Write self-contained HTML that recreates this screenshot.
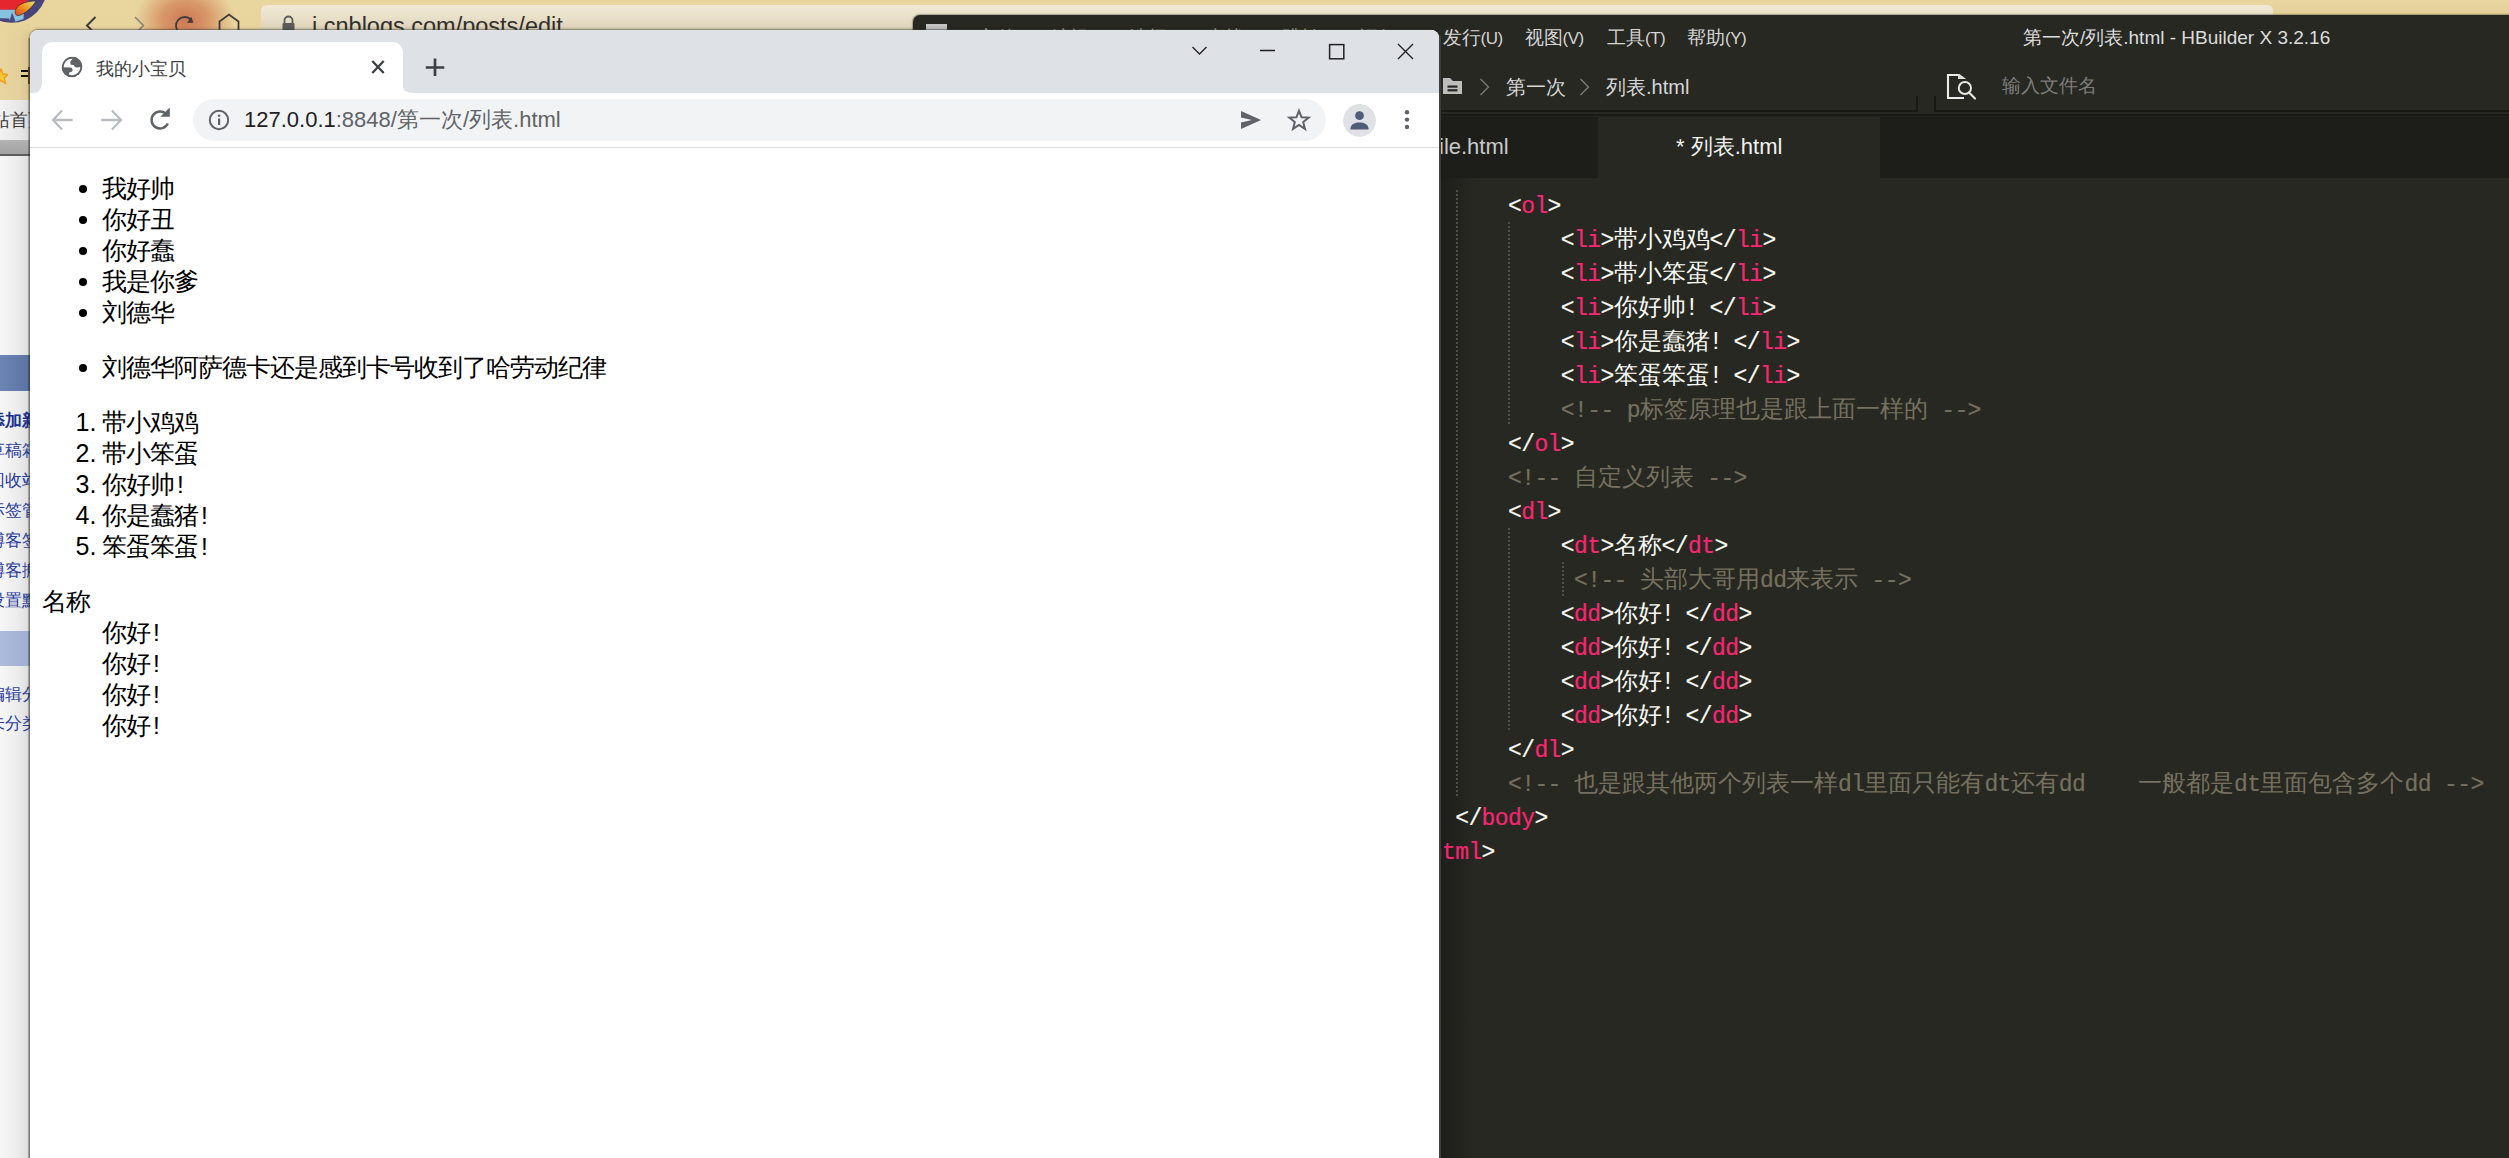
<!DOCTYPE html>
<html><head><meta charset="utf-8">
<style>
*{box-sizing:border-box;margin:0;padding:0}
html,body{width:2509px;height:1158px;overflow:hidden;font-family:"Liberation Sans",sans-serif;background:#e9d7a3}
.abs{position:absolute}
/* background browser */
#bgtop{left:0;top:0;width:2509px;height:40px;background:linear-gradient(#e9d69f 0,#e8d59e 100%)}
#bgaddr{left:261px;top:5px;width:2012px;height:25px;border-radius:6px 6px 0 0;background:linear-gradient(#f1e9d6,#ebe2cc 40%,#ddd2b7)}
#leftstrip{left:0;top:156px;width:30px;height:1002px;background:linear-gradient(90deg,#f7f7f7,#ececec 60%,#dcdcdc)}
/* hbuilder */
#hb{left:913px;top:15px;width:1600px;height:1150px;background:#272822;border-radius:7px 0 0 0;overflow:hidden;box-shadow:0 0 0 1px rgba(140,130,105,.55),0 0 3px rgba(0,0,0,.25)}
/* chrome */
#chrome{left:30px;top:30px;width:1409px;height:1140px;background:#fff;border-radius:8px 8px 0 0;overflow:hidden;box-shadow:0 0 0 1px rgba(90,85,70,.35),0 -1px 3px rgba(0,0,0,.3)}
#tabstrip{left:0;top:0;width:1409px;height:63px;background:#dee1e6}
#tab{left:12px;top:12px;width:361px;height:51px;background:#fff;border-radius:10px 10px 0 0}
#toolbar{left:0;top:63px;width:1409px;height:55px;background:#fff;border-bottom:1px solid #dadce0}
#omni{left:163px;top:69px;width:1133px;height:42px;background:#f1f3f4;border-radius:21px}
#content{left:0;top:118px;width:1409px;height:1022px;background:#fff;font-size:24px;line-height:31px;color:#000}
#content .cjk{font-family:"Liberation Sans",sans-serif}
.code{position:absolute;font-family:"Liberation Mono",monospace;font-size:23px;letter-spacing:-0.6px;-webkit-text-stroke:0.2px currentColor;white-space:pre;color:#f8f8f2;height:34px;line-height:34px}
.ln{position:absolute;white-space:nowrap;height:31px;line-height:31px;font-size:24.5px;letter-spacing:-1px;margin-top:1px}
.bul{position:absolute;left:48.6px;width:8.6px;height:8.6px;border-radius:50%;background:#000;margin-top:1.6px}
.num{position:absolute;left:45.5px;width:50px;height:31px;line-height:31px;font-size:25px;margin-top:1px}
.ex{margin-left:3px}
.mi{top:11px;font-size:19px;line-height:24px;color:#d4d4d4;white-space:nowrap}
.mi i{font-style:normal;font-size:17px;letter-spacing:-0.5px}
.bc{top:60px;font-size:20px;line-height:24px;color:#d6d6d6;white-space:nowrap}
.tabt{top:120px;font-size:22px;line-height:24px;white-space:nowrap}
.ig{width:2px;background:repeating-linear-gradient(#4f4f49 0 2px,transparent 2px 4px)}
.z{font-size:24px;line-height:1px;letter-spacing:0;-webkit-text-stroke:0}
.zx{display:inline-block;width:24px;text-align:left;padding-left:3px;font-family:"Liberation Sans",sans-serif}
.lsi{font-size:17px;line-height:30px;color:#2b3f9e;white-space:nowrap}
.t{color:#f92672}
.c{color:#75715e}
</style></head><body>
<div id="bgtop" class="abs"></div>
<div class="abs" style="left:0;top:20px;width:30px;height:80px;background:linear-gradient(90deg,#e8d59f 0,#e4d19b 18px,#dac690 30px);-webkit-mask-image:linear-gradient(transparent 0,#000 20px)"></div>
<div class="abs" style="left:135px;top:-20px;width:100px;height:80px;border-radius:50%;background:radial-gradient(closest-side,rgba(205,115,80,.95),rgba(210,130,85,.75) 45%,rgba(225,180,120,0) 100%)"></div>
<svg class="abs" style="left:0;top:0" width="60" height="30" viewBox="0 0 60 30">
  <defs><clipPath id="av"><circle cx="12" cy="-12" r="34.8"/></clipPath>
  <linearGradient id="fl" x1="0" y1="1" x2="1" y2="0"><stop offset="0" stop-color="#e0401a"/><stop offset=".5" stop-color="#f0951e"/><stop offset="1" stop-color="#e8e080"/></linearGradient></defs>
  <circle cx="12" cy="-12" r="34.8" fill="#47457a"/>
  <g clip-path="url(#av)">
    <path d="M-5 -5 L28 -5 L27.5 2 C26 4 21 5 19 6 L16.5 9.8 L-5 9.8 Z" fill="#e5262f"/>
    <path d="M-5 9.8 L16.5 9.8 L23.8 14 L23.5 19 L16 21.5 L-5 18.5 Z" fill="#86c3de"/>
    <path d="M9.5 21 L12 12.5 L15.5 21.5 Z" fill="#4a4a80"/>
    <path d="M-5 18 L9 18.5 L10 22 L-5 22 Z" fill="#46447a"/>
    <path d="M15.8 14.5 C14 11.5 16 7 21 4.2 C26 1.5 33 0.8 35.8 1.2 C34 4.5 30 9 26.5 11.5 C22.5 14.5 17.5 17 15.8 14.5 Z" fill="url(#fl)" stroke="#222" stroke-width=".6"/>
  </g>
</svg>
<svg class="abs" style="left:80px;top:9px" width="170" height="24" viewBox="0 0 170 24">
  <path d="M15.5 8 L7 16.5 L15.5 25" fill="none" stroke="#3a3a3a" stroke-width="2"/>
  <path d="M55 8 L63.5 16.5 L55 25" fill="none" stroke="#8a8578" stroke-width="1.6"/>
  <path d="M110.8 10.5 A8.7 8.7 0 1 0 112.3 21" fill="none" stroke="#3c3c3c" stroke-width="1.8"/>
  <path d="M107 13.8 L113.5 13.8 L111.3 8 Z" fill="#3c3c3c"/>
  <path d="M139.5 23 L139.5 12.5 L149 5.5 L158.5 12.5 L158.5 23" fill="none" stroke="#3c3c3c" stroke-width="1.8"/>
</svg>
<div id="bgaddr" class="abs"></div>
<svg class="abs" style="left:281px;top:15px" width="15" height="18" viewBox="0 0 15 18"><path d="M3.5 8 V5.5 A4 4 0 0 1 11.5 5.5 V8" fill="none" stroke="#5a5a5a" stroke-width="1.8"/><rect x="1.5" y="8" width="12" height="10" rx="1" fill="#5a5a5a"/></svg>
<div class="abs" style="left:312px;top:11px;font-size:23.5px;line-height:30px;color:#303030;white-space:nowrap">i.cnblogs.com/posts/edit</div>
<div class="abs" style="left:2273px;top:0;width:236px;height:16px;background:linear-gradient(#e8d59f,#e2cf99)"></div>
<div class="abs" style="left:0;top:100px;width:30px;height:40px;background:linear-gradient(90deg,#f2f2f2,#e6e6e6 70%,#d8d8d8)"></div>
<div class="abs" style="left:-8px;top:107px;font-size:18px;line-height:26px;color:#3a3a3a;white-space:nowrap">站首页</div>
<div class="abs" style="left:0;top:140px;width:30px;height:14px;background:linear-gradient(#b3b3b3,#a2a2a2)"></div>
<div class="abs" style="left:0;top:154px;width:30px;height:2px;background:#5e5e5e"></div>
<svg class="abs" style="left:-6px;top:68px" width="14" height="17" viewBox="0 0 14 17"><path d="M7 1 L9 6 L14 6.5 L10.3 10 L11.5 15.5 L7 12.8 L2.5 15.5 L3.7 10 L0 6.5 L5 6 Z" fill="#f7c530" stroke="#f09a20" stroke-width="1.3"/></svg>
<div class="abs" style="left:21px;top:70px;width:9px;height:2px;background:#111"></div>
<div class="abs" style="left:21px;top:75px;width:9px;height:2px;background:#111"></div>
<div class="abs" style="left:28px;top:67px;width:2px;height:17px;background:#7a5530"></div>
<div id="leftstrip" class="abs"></div>
<div class="abs" style="left:0;top:355px;width:30px;height:36px;background:linear-gradient(90deg,#6d85b3,#5b72a3)"></div>
<div class="abs" style="left:0;top:631px;width:30px;height:35px;background:linear-gradient(90deg,#aebcdb,#9eaed0)"></div>
<div class="abs lsi" style="top:406px;left:-12px;font-weight:bold;color:#1a2f8f;">添加新随笔</div>
<div class="abs lsi" style="top:436px;left:-12px;">草稿箱</div>
<div class="abs lsi" style="top:466px;left:-12px;">回收站</div>
<div class="abs lsi" style="top:496px;left:-12px;">标签管理</div>
<div class="abs lsi" style="top:526px;left:-12px;">博客签名</div>
<div class="abs lsi" style="top:556px;left:-12px;">博客搬家</div>
<div class="abs lsi" style="top:586px;left:-12px;">设置默认编辑器</div>
<div class="abs lsi" style="top:680px;left:-12px;">编辑分类</div>
<div class="abs lsi" style="top:709px;left:-12px;">未分类</div>
<div id="hb" class="abs">
  <div class="abs" style="left:13px;top:9px;width:21px;height:21px;background:#c2c2c2"></div>
  <div class="abs mi" style="left:65.0px">文件<i>(F)</i></div><div class="abs mi" style="left:138.0px">编辑<i>(E)</i></div><div class="abs mi" style="left:216.0px">选择<i>(S)</i></div><div class="abs mi" style="left:293.0px">查找<i>(I)</i></div><div class="abs mi" style="left:369.0px">跳转<i>(G)</i></div><div class="abs mi" style="left:446.0px">运行<i>(R)</i></div><div class="abs mi" style="left:529.5px">发行<i>(U)</i></div><div class="abs mi" style="left:611.5px">视图<i>(V)</i></div><div class="abs mi" style="left:694.0px">工具<i>(T)</i></div><div class="abs mi" style="left:774.0px">帮助<i>(Y)</i></div>
  <div class="abs" style="left:1110px;top:11px;font-size:19px;line-height:24px;color:#dcdcdc;white-space:nowrap">第一次/列表.html - HBuilder X 3.2.16</div>
  <!-- breadcrumb -->
  <svg class="abs" style="left:530px;top:62px" width="20" height="18" viewBox="0 0 20 18"><path d="M0 1 L7 1 L10 4 L19 4 L19 17 L0 17 Z" fill="#bdbdbd"/><rect x="4.5" y="8.5" width="10" height="2.2" fill="#272822"/><rect x="4.5" y="12.2" width="10" height="2.2" fill="#272822"/></svg>
  <svg class="abs" style="left:566px;top:63px" width="12" height="18" viewBox="0 0 12 18"><path d="M1.5 1 L9.5 9 L1.5 17" fill="none" stroke="#7c7c7c" stroke-width="1.3"/></svg>
  <svg class="abs" style="left:666px;top:63px" width="12" height="18" viewBox="0 0 12 18"><path d="M1.5 1 L9.5 9 L1.5 17" fill="none" stroke="#7c7c7c" stroke-width="1.3"/></svg>
  <div class="abs bc" style="left:593px">第一次</div>
  <div class="abs bc" style="left:693px">列表.html</div>
  <div class="abs" style="left:0;top:95px;width:1005px;height:2px;background:#181915"></div>
  <div class="abs" style="left:1021px;top:95px;width:600px;height:2px;background:#181915"></div>
  <div class="abs" style="left:0;top:97px;width:1600px;height:2px;background:#272822"></div>
  <div class="abs" style="left:0;top:99px;width:1600px;height:2px;background:#181915"></div>
  <div class="abs" style="left:1003px;top:81px;width:2px;height:16px;background:#181915"></div>
  <div class="abs" style="left:1021px;top:81px;width:2px;height:16px;background:#181915"></div>
  <svg class="abs" style="left:1033px;top:57px" width="34" height="30" viewBox="0 0 34 30">
    <path d="M13 3 L2 3 L2 26 L18 26" fill="none" stroke="#ececec" stroke-width="2.1"/>
    <path d="M12 2 L13.5 2 L20.2 7 L12 7 Z" fill="#dedede"/>
    <circle cx="18.9" cy="16" r="6.1" fill="none" stroke="#e6e6e6" stroke-width="2"/>
    <path d="M23 20.6 L29 26.6" stroke="#e6e6e6" stroke-width="2.1" stroke-linecap="round"/>
  </svg>
  <div class="abs" style="left:1089px;top:59px;font-size:19px;line-height:24px;color:#7d7d7d;white-space:nowrap">输入文件名</div>
  <!-- tabs -->
  <div class="abs" style="left:0;top:101px;width:1600px;height:62px;background:#1d1e1a;border-top:1px solid #24251f"></div>
  <div class="abs" style="left:685px;top:102px;width:282px;height:61px;background:#272822"></div>
  <div class="abs tabt" style="left:526px;color:#c9c9c9">ile.html</div>
  <div class="abs tabt" style="left:763px;color:#f2f2f2">* 列表.html</div>
  <div class="abs" style="left:526px;top:163px;width:36px;height:1000px;background:linear-gradient(90deg,rgba(20,20,17,.55),rgba(20,20,17,0))"></div>
  <!-- indent guides -->
  <div class="abs ig" style="left:543px;top:175px;height:608px"></div>
  <div class="abs ig" style="left:595px;top:207px;height:204px"></div>
  <div class="abs ig" style="left:595px;top:513px;height:204px"></div>
  <div class="abs ig" style="left:649px;top:547px;height:34px"></div>
<div class="code" style="left:595.0px;top:175.4px">&lt;<span class="t">ol</span>&gt;</div>
<div class="code" style="left:647.8px;top:209.4px">&lt;<span class="t">li</span>&gt;<span class="z">带小鸡鸡</span>&lt;/<span class="t">li</span>&gt;</div>
<div class="code" style="left:647.8px;top:243.4px">&lt;<span class="t">li</span>&gt;<span class="z">带小笨蛋</span>&lt;/<span class="t">li</span>&gt;</div>
<div class="code" style="left:647.8px;top:277.4px">&lt;<span class="t">li</span>&gt;<span class="z">你好帅</span><span class="z zx">!</span>&lt;/<span class="t">li</span>&gt;</div>
<div class="code" style="left:647.8px;top:311.4px">&lt;<span class="t">li</span>&gt;<span class="z">你是蠢猪</span><span class="z zx">!</span>&lt;/<span class="t">li</span>&gt;</div>
<div class="code" style="left:647.8px;top:345.4px">&lt;<span class="t">li</span>&gt;<span class="z">笨蛋笨蛋</span><span class="z zx">!</span>&lt;/<span class="t">li</span>&gt;</div>
<div class="code c" style="left:647.8px;top:379.4px">&lt;!-- p<span class="z">标签原理也是跟上面一样的</span> --&gt;</div>
<div class="code" style="left:595.0px;top:413.4px">&lt;/<span class="t">ol</span>&gt;</div>
<div class="code c" style="left:595.0px;top:447.4px">&lt;!-- <span class="z">自定义列表</span> --&gt;</div>
<div class="code" style="left:595.0px;top:481.4px">&lt;<span class="t">dl</span>&gt;</div>
<div class="code" style="left:647.8px;top:515.4px">&lt;<span class="t">dt</span>&gt;<span class="z">名称</span>&lt;/<span class="t">dt</span>&gt;</div>
<div class="code c" style="left:647.8px;top:549.4px"> &lt;!-- <span class="z">头部大哥用</span>dd<span class="z">来表示</span> --&gt;</div>
<div class="code" style="left:647.8px;top:583.4px">&lt;<span class="t">dd</span>&gt;<span class="z">你好</span><span class="z zx">!</span>&lt;/<span class="t">dd</span>&gt;</div>
<div class="code" style="left:647.8px;top:617.4px">&lt;<span class="t">dd</span>&gt;<span class="z">你好</span><span class="z zx">!</span>&lt;/<span class="t">dd</span>&gt;</div>
<div class="code" style="left:647.8px;top:651.4px">&lt;<span class="t">dd</span>&gt;<span class="z">你好</span><span class="z zx">!</span>&lt;/<span class="t">dd</span>&gt;</div>
<div class="code" style="left:647.8px;top:685.4px">&lt;<span class="t">dd</span>&gt;<span class="z">你好</span><span class="z zx">!</span>&lt;/<span class="t">dd</span>&gt;</div>
<div class="code" style="left:595.0px;top:719.4px">&lt;/<span class="t">dl</span>&gt;</div>
<div class="code c" style="left:595.0px;top:753.4px">&lt;!-- <span class="z">也是跟其他两个列表一样</span>dl<span class="z">里面只能有</span>dt<span class="z">还有</span>dd    <span class="z">一般都是</span>dt<span class="z">里面包含多个</span>dd --&gt;</div>
<div class="code" style="left:542.2px;top:787.4px">&lt;/<span class="t">body</span>&gt;</div>
<div class="code" style="left:489.4px;top:821.4px">&lt;/<span class="t">html</span>&gt;</div>
</div>
<div id="chrome" class="abs">
  <div id="tabstrip" class="abs"></div>
  <div id="tab" class="abs"></div>
  <div id="toolbar" class="abs"></div>
  <div id="omni" class="abs"></div>

  <svg class="abs" style="left:0;top:0" width="1409" height="120">
    <!-- tab flares -->
    <path d="M0 63 L12 63 L12 53 Q12 63 2 63 Z" fill="#fff"/>
  </svg>
  <svg class="abs" style="left:30px;top:53px" width="12" height="10"><path d="M12 0 L12 10 L0 10 Q12 10 12 0Z" fill="#fff"/></svg>
  <svg class="abs" style="left:372px;top:53px" width="12" height="10"><path d="M0 0 L0 10 L12 10 Q0 10 0 0Z" fill="#fff"/></svg>
  <!-- globe -->
  <svg class="abs" style="left:30px;top:25px" width="24" height="24" viewBox="0 0 24 24">
    <defs><clipPath id="gc"><circle cx="12" cy="12" r="10.4"/></clipPath></defs>
    <g clip-path="url(#gc)">
    <circle cx="12" cy="12" r="10.4" fill="#5f6368"/>
    <circle cx="12" cy="12" r="8.3" fill="#fff"/>
    <path d="M14 1 L13.2 3.5 C11.5 4.8 10.4 5.8 10.3 7.3 C10.2 8.5 10.4 9.3 11 9.8 L14 10 C14.2 11.2 15 12.4 16.7 12.5 C18 12.5 18.8 12.2 19.4 12 L24 12 L24 1 Z" fill="#5f6368"/>
    <path d="M0 12.3 L10.5 12.4 C11.8 12.6 12.6 13.6 12.6 14.9 C12.6 16 12 16.7 11 16.9 L9.6 17.3 C9.1 18 9 19 9 20.5 L9 24 L0 24 Z" fill="#5f6368"/>
    </g>
  </svg>
  <div class="abs" style="left:66px;top:27px;font-size:18px;line-height:24px;color:#3c4043;white-space:nowrap">我的小宝贝</div>
  <!-- tab close -->
  <svg class="abs" style="left:340px;top:29px" width="16" height="16" viewBox="0 0 16 16"><path d="M2.3 2 L13.7 14 M13.7 2 L2.3 14" stroke="#3c4043" stroke-width="2.3"/></svg>
  <!-- new tab plus -->
  <svg class="abs" style="left:394px;top:27px" width="22" height="22" viewBox="0 0 22 22"><path d="M11 1.5 V19 M1.8 10.5 H20.3" stroke="#3c4043" stroke-width="2.7"/></svg>
  <!-- window controls -->
  <svg class="abs" style="left:1155px;top:10px" width="254" height="30" viewBox="0 0 254 30">
    <path d="M7.5 7 L14.5 14 L21.5 7" fill="none" stroke="#202124" stroke-width="1.3"/>
    <path d="M75 10.5 H90" stroke="#202124" stroke-width="1.6"/>
    <rect x="144.6" y="4.6" width="14.2" height="14.2" fill="none" stroke="#202124" stroke-width="1.5"/>
    <path d="M213 4 L228 19 M228 4 L213 19" stroke="#202124" stroke-width="1.4"/>
  </svg>
  <!-- back / fwd / reload -->
  <svg class="abs" style="left:20px;top:78px" width="150" height="24" viewBox="0 0 150 24">
    <path d="M3 12 H22.7 M12 2.5 L3 12 L12 21.5" fill="none" stroke="#b9bcc0" stroke-width="2.3"/>
    <path d="M51.3 12 H71 M62 2.5 L71 12 L62 21.5" fill="none" stroke="#b9bcc0" stroke-width="2.3"/>
    <path d="M116.3 6.2 A8.5 8.5 0 1 0 117.8 15.5" fill="none" stroke="#5f6368" stroke-width="2.5"/>
    <path d="M110.3 8.8 L119.8 8.8 L119.8 -0.5 Z" fill="#5f6368"/>
  </svg>
  <!-- info icon -->
  <svg class="abs" style="left:178px;top:79px" width="22" height="22" viewBox="0 0 22 22">
    <circle cx="11" cy="11" r="9.2" fill="none" stroke="#5f6368" stroke-width="2"/>
    <rect x="10" y="9.5" width="2.2" height="6.5" fill="#5f6368"/>
    <circle cx="11.1" cy="6.8" r="1.3" fill="#5f6368"/>
  </svg>
  <div class="abs" style="left:214px;top:77px;font-size:22px;line-height:26px;color:#5f6368;white-space:nowrap"><span style="color:#202124">127.0.0.1</span>:8848/第一次/列表.html</div>
  <!-- send -->
  <svg class="abs" style="left:1209px;top:79px" width="24" height="22" viewBox="0 0 24 22">
    <path d="M2 2 L22 11 L2 20 L2 13.5 L13 11 L2 8.5 Z" fill="#5f6368"/>
  </svg>
  <!-- star -->
  <svg class="abs" style="left:1257px;top:78px" width="24" height="24" viewBox="0 0 24 24">
    <path d="M12 2.8 L14.6 9.3 L21.6 9.6 L16.2 14 L18 20.9 L12 17 L6 20.9 L7.8 14 L2.4 9.6 L9.4 9.3 Z" fill="none" stroke="#5f6368" stroke-width="2" stroke-linejoin="miter"/>
  </svg>
  <!-- profile -->
  <svg class="abs" style="left:1313px;top:74px" width="33" height="33" viewBox="0 0 33 33">
    <circle cx="16.5" cy="16.5" r="16.4" fill="#dfe1e5"/>
    <circle cx="16.5" cy="11.7" r="4.4" fill="#4e5d78"/>
    <path d="M7.4 25.6 C7.4 20 12 18.6 16.5 18.6 C21 18.6 25.6 20 25.6 25.6 Z" fill="#4e5d78"/>
  </svg>
  <!-- kebab -->
  <svg class="abs" style="left:1370px;top:79px" width="14" height="22" viewBox="0 0 14 22">
    <circle cx="7" cy="3.2" r="2.2" fill="#5f6368"/><circle cx="7" cy="10.6" r="2.2" fill="#5f6368"/><circle cx="7" cy="18" r="2.2" fill="#5f6368"/>
  </svg>
  <div id="content" class="abs">
<div class="ln" style="top:24.0px;left:72px">我好帅</div>
<div class="bul" style="top:35.2px"></div>
<div class="ln" style="top:55.0px;left:72px">你好丑</div>
<div class="bul" style="top:66.2px"></div>
<div class="ln" style="top:86.0px;left:72px">你好蠢</div>
<div class="bul" style="top:97.2px"></div>
<div class="ln" style="top:117.0px;left:72px">我是你爹</div>
<div class="bul" style="top:128.2px"></div>
<div class="ln" style="top:148.0px;left:72px">刘德华</div>
<div class="bul" style="top:159.2px"></div>
<div class="ln" style="top:203.0px;left:72px">刘德华阿萨德卡还是感到卡号收到了哈劳动纪律</div>
<div class="bul" style="top:214.2px"></div>
<div class="ln" style="top:258.0px;left:72px">带小鸡鸡</div>
<div class="num" style="top:258.0px">1.</div>
<div class="ln" style="top:289.0px;left:72px">带小笨蛋</div>
<div class="num" style="top:289.0px">2.</div>
<div class="ln" style="top:320.0px;left:72px">你好帅<span class="ex">!</span></div>
<div class="num" style="top:320.0px">3.</div>
<div class="ln" style="top:351.0px;left:72px">你是蠢猪<span class="ex">!</span></div>
<div class="num" style="top:351.0px">4.</div>
<div class="ln" style="top:382.0px;left:72px">笨蛋笨蛋<span class="ex">!</span></div>
<div class="num" style="top:382.0px">5.</div>
<div class="ln" style="top:437.0px;left:12px">名称</div>
<div class="ln" style="top:468.0px;left:72px">你好<span class="ex">!</span></div>
<div class="ln" style="top:499.0px;left:72px">你好<span class="ex">!</span></div>
<div class="ln" style="top:530.0px;left:72px">你好<span class="ex">!</span></div>
<div class="ln" style="top:561.0px;left:72px">你好<span class="ex">!</span></div>
</div>
</div>
<div class="abs" style="left:1439px;top:36px;width:2px;height:1122px;background:#3e3e3e"></div>
<div class="abs" style="left:28px;top:38px;width:2px;height:1120px;background:rgba(0,0,0,.24)"></div>
</body></html>
